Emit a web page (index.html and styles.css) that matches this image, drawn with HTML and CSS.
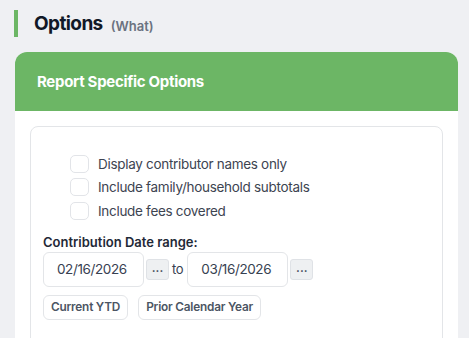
FILE: index.html
```html
<!DOCTYPE html>
<html lang="en">
<head>
  <meta charset="UTF-8" />
  <meta name="viewport" content="width=device-width, initial-scale=1.0"/>
  <title>Report Options</title>
  <link rel="stylesheet" href="styles.css">
</head>
<body>
<div class="page">
  <div class="section-title">
    <h1>Options</h1>
    <span class="sub">(What)</span>
  </div>

  <div class="card">
    <div class="card-header">Report Specific Options</div>
    <div class="card-body">
      <div class="inner-box">
        <div class="check-list">
          <label class="check-row"><input type="checkbox" /><span>Display contributor names only</span></label>
          <label class="check-row"><input type="checkbox" /><span>Include family/household subtotals</span></label>
          <label class="check-row"><input type="checkbox" /><span>Include fees covered</span></label>
        </div>

        <div class="field-label">Contribution Date range:</div>
        <div class="date-row">
          <input class="date-input" type="text" value="02/16/2026" />
          <button class="pick-btn">...</button>
          <span class="to">to</span>
          <input class="date-input" type="text" value="03/16/2026" />
          <button class="pick-btn">...</button>
        </div>
        <div class="quick-row">
          <button class="quick-btn">Current YTD</button>
          <button class="quick-btn">Prior Calendar Year</button>
        </div>
      </div>
    </div>
  </div>
</div>
</body>
</html>
```

FILE: styles.css
```css
body {
  margin: 0;
  font-family: Inter, "Noto Sans", sans-serif;
  background: #eff0f3;
  color: #374151;
}

.page {
  padding: 10px 11px 0 15px;
}

.section-title {
  display: flex;
  align-items: center;
  gap: 8px;
  height: 27px;
  margin-left: -1px;
  padding-left: 16px;
  border-left: 4px solid #6cb665;
}

.section-title h1 {
  margin: 0;
  font-size: 19px;
  font-weight: 700;
  letter-spacing: -0.6px;
  color: #111827;
}

.section-title .sub {
  font-size: 13px;
  font-weight: 600;
  color: #6b7280;
  padding-top: 4px;
}

.card {
  margin-top: 15px;
  background: #fff;
  border-radius: 12px 12px 0 0;
  overflow: hidden;
}

.card-header {
  height: 59px;
  display: flex;
  align-items: center;
  padding-left: 22px;
  background: #6cb665;
  color: #fff;
  font-size: 15px;
  font-weight: 700;
  letter-spacing: -0.3px;
}

.card-body {
  padding: 15px 15px 40px;
}

.inner-box {
  border: 1px solid #e3e5e8;
  border-radius: 8px;
  padding: 25px 12px 30px;
}

.check-list {
  padding-left: 27px;
}

.check-row {
  display: flex;
  align-items: center;
  gap: 9px;
  height: 23.5px;
  font-size: 13.5px;
  letter-spacing: -0.3px;
  color: #3d4451;
}

.check-row input {
  appearance: none;
  margin: 0;
  width: 19px;
  height: 18px;
  border: 1px solid #e2e4e8;
  border-radius: 5px;
  background: #fff;
}

.field-label {
  margin-top: 11px;
  font-size: 13px;
  font-weight: 600;
  color: #1f2937;
  line-height: 17px;
}

.date-row {
  display: flex;
  align-items: center;
  margin-top: 1px;
}

.date-input {
  box-sizing: border-box;
  width: 101px;
  height: 35px;
  padding: 0 0 0 13px;
  border: 1px solid #e3e5e8;
  border-radius: 6px;
  font-family: inherit;
  font-size: 13.5px;
  letter-spacing: -0.4px;
  color: #374151;
}

.pick-btn {
  box-sizing: border-box;
  width: 23px;
  height: 21px;
  margin: 0 2px;
  padding: 0 0 4px;
  border: 1px solid #dfe2e6;
  border-radius: 3px;
  background: #eef0f2;
  font-family: inherit;
  font-size: 12px;
  font-weight: 600;
  color: #374151;
}

.to {
  margin: 0 4px 0 1px;
  font-size: 13px;
  letter-spacing: -0.3px;
}

.quick-row {
  display: flex;
  gap: 10px;
  margin-top: 8px;
}

.quick-btn {
  height: 25px;
  padding: 0 7px;
  border: 1px solid #e3e5e8;
  border-radius: 6px;
  background: #fff;
  font-family: inherit;
  font-size: 11.8px;
  font-weight: 600;
  letter-spacing: -0.2px;
  color: #4b5563;
}
```
